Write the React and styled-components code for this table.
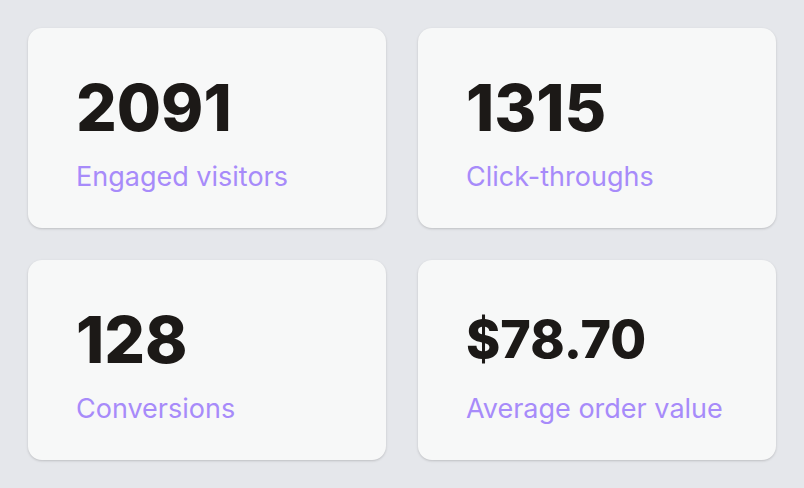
import React from 'react'
import styled, { createGlobalStyle } from 'styled-components'

const GlobalStyle = createGlobalStyle`
  html, body {
    margin: 0;
    padding: 0;
    background: #e5e7eb;
    font-family: Inter, "Noto Sans", sans-serif;
  }
`

const Grid = styled.div`
  display: grid;
  grid-template-columns: repeat(2, 358px);
  grid-auto-rows: 200px;
  gap: 32px;
  padding: 28px;
`

const Card = styled.div`
  background: #f7f8f8;
  border-radius: 14px;
  box-shadow: 0 1px 3px rgba(0, 0, 0, 0.12), 0 1px 2px rgba(0, 0, 0, 0.06);
  padding: 48px;
  box-sizing: border-box;
`

// value text shrinks for longer numbers, but keeps the same row height
const Value = styled.div`
  height: 64px;
  font-size: ${props => props.size}px;
  font-weight: 800;
  line-height: 64px;
  color: #1c1917;
  white-space: nowrap;
`

const Label = styled.div`
  margin-top: 21px;
  font-size: 27px;
  line-height: 1.2;
  color: #a78bfa;
`

const stats = [
  { value: '2091', label: 'Engaged visitors' },
  { value: '1315', label: 'Click-throughs' },
  { value: '128', label: 'Conversions' },
  { value: '$78.70', label: 'Average order value' },
]

export default function App() {
  return (
    <>
      <GlobalStyle />
      <Grid>
        {stats.map(s => (
          <Card key={s.label}>
            <Value size={s.value.length > 5 ? 52 : 64}>{s.value}</Value>
            <Label>{s.label}</Label>
          </Card>
        ))}
      </Grid>
    </>
  )
}
